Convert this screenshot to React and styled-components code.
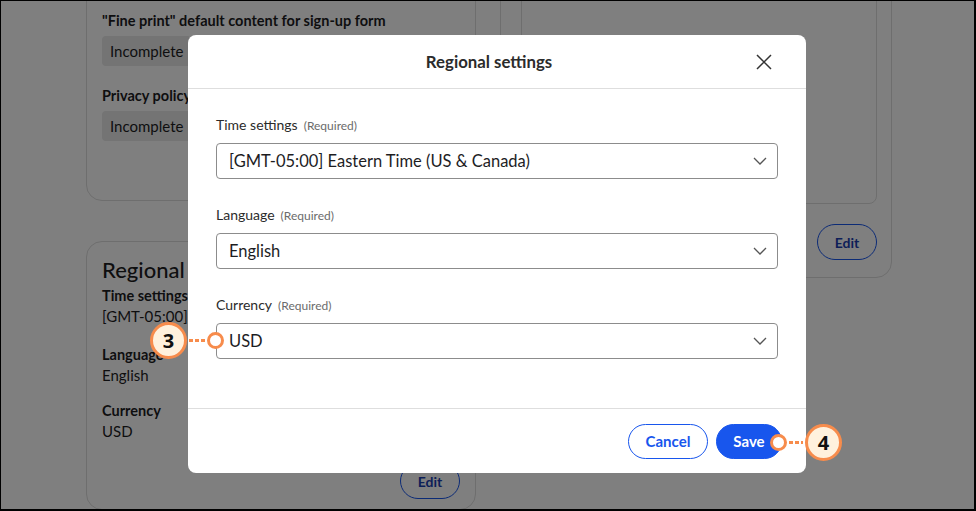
import React from 'react'
import styled, { createGlobalStyle } from 'styled-components'

const GlobalStyle = createGlobalStyle`
  html, body {
    margin: 0;
    padding: 0;
    background: #000;
  }
  body {
    font-family: Lato, "Open Sans", sans-serif;
    color: #1d1d1f;
  }
`

const Frame = styled.div`
  width: 973px;
  height: 508px;
  margin: 1px 2px 2px 1px;
  background: #fff;
  position: relative;
  overflow: hidden;
`

const Page = styled.div`
  display: grid;
  grid-template-columns: 390px 392px;
  column-gap: 24px;
  padding-left: 85px;
  margin-top: -60px;
`

const Column = styled.div`
  display: flex;
  flex-direction: column;
  gap: 40px;
`

const Card = styled.div`
  border: 1px solid #dcdcdc;
  border-radius: 16px;
  padding: ${p => p.pad || '16px 15px'};
  height: ${p => p.h}px;
  box-sizing: border-box;
  display: flex;
  flex-direction: column;
  overflow: hidden;
`

const FieldTitle = styled.div`
  font-size: 14.5px;
  font-weight: 700;
  line-height: 20px;
  margin-top: ${p => p.mt || 0}px;
`

const FieldValue = styled.div`
  font-size: 15px;
  line-height: 20px;
`

const Chip = styled.span`
  align-self: flex-start;
  background: #e8e8e8;
  border-radius: 4px;
  padding: 5px 8px;
  font-size: 15px;
  line-height: 20px;
  margin-top: 5px;
`

const CardHeading = styled.h2`
  margin: 0 0 2px;
  font-size: 22px;
  font-weight: 500;
  line-height: 28px;
`

const EditButton = styled.button`
  align-self: flex-end;
  margin-top: ${p => (p.flush ? '0' : 'auto')};
  width: 60px;
  height: 36px;
  flex-shrink: 0;
  border-radius: 18px;
  border: 1.5px solid #1856ed;
  background: #fff;
  color: #1b3fb0;
  font-family: inherit;
  font-size: 14px;
  font-weight: 700;
`

const InnerBox = styled.div`
  border: 1px solid #dcdcdc;
  border-radius: 8px;
  height: 260px;
  flex-shrink: 0;
  margin-bottom: 20px;
`

const Overlay = styled.div`
  position: absolute;
  inset: 0;
  background: rgba(0, 0, 0, 0.5);
  padding: 34px 0 0 187px;
`

const Modal = styled.div`
  width: 618px;
  height: 438px;
  background: #fff;
  border-radius: 8px;
  display: flex;
  flex-direction: column;
  position: relative;
`

const ModalHeader = styled.div`
  height: 53px;
  border-bottom: 1px solid #dedede;
  display: flex;
  align-items: center;
  justify-content: center;
  padding-right: 16px;
  position: relative;
`

const ModalTitle = styled.h1`
  margin: 0;
  font-size: 16.8px;
  font-weight: 700;
  color: #2b2b2b;
`

const CloseButton = styled.button`
  position: absolute;
  right: 32px;
  top: 17px;
  width: 20px;
  height: 20px;
  padding: 0;
  border: none;
  background: none;
  display: flex;
`

const ModalBody = styled.div`
  flex: 1;
  padding: 26px 28px 0;
  display: flex;
  flex-direction: column;
  gap: 26px;
`

const Field = styled.div`
  display: flex;
  flex-direction: column;
  gap: 8px;
`

const Label = styled.div`
  display: flex;
  align-items: baseline;
  gap: 6px;
  font-size: 14px;
  line-height: 19px;
  color: #2b2b2b;
`

const Required = styled.span`
  font-size: 12px;
  color: #6b6b6b;
`

const Select = styled.div`
  height: 36px;
  box-sizing: border-box;
  border: 1px solid #8c8c8c;
  border-radius: 4px;
  display: flex;
  align-items: center;
  justify-content: space-between;
  padding: 0 10px 0 12px;
  font-size: 16.5px;
  color: #1d1d1f;
`

const ModalFooter = styled.div`
  height: 64px;
  border-top: 1px solid #dedede;
  display: flex;
  align-items: center;
  justify-content: flex-end;
  gap: 8px;
  padding-right: 24px;
`

const Button = styled.button`
  height: 35px;
  border-radius: 18px;
  padding: 0;
  width: ${p => p.w}px;
  font-family: inherit;
  font-size: 15px;
  font-weight: 700;
  border: 1.5px solid #1856ed;
  background: ${p => (p.primary ? '#1856ed' : '#fff')};
  color: ${p => (p.primary ? '#fff' : '#1856ed')};
`

const Callout = styled.div`
  position: absolute;
  left: ${p => p.x}px;
  top: ${p => p.y}px;
  display: flex;
  align-items: center;
  flex-direction: ${p => (p.reverse ? 'row-reverse' : 'row')};
`

const Bubble = styled.div`
  width: 37px;
  height: 37px;
  box-sizing: border-box;
  border-radius: 50%;
  border: 3px solid #f78c4c;
  background: #fff1dd;
  display: flex;
  align-items: center;
  justify-content: center;
  font-family: "Open Sans", sans-serif;
  font-size: 20px;
  font-weight: 700;
  color: #111;
`

const Dots = styled.div`
  width: ${p => p.len}px;
  height: 3px;
  margin: 0 2px;
  background: repeating-linear-gradient(90deg, #f78c4c 0 4px, transparent 4px 6px);
`

const Ring = styled.div`
  width: 17px;
  height: 17px;
  box-sizing: border-box;
  border-radius: 50%;
  border: 3px solid #f78c4c;
  background: #fff;
`

const Chevron = () => (
  <svg width="14" height="8" viewBox="0 0 14 8" fill="none">
    <path d="M1 1l6 6 6-6" stroke="#555" strokeWidth="1.3" />
  </svg>
)

function SelectField({ label, value }) {
  return (
    <Field>
      <Label>
        <span>{label}</span>
        <Required>(Required)</Required>
      </Label>
      <Select>
        <span>{value}</span>
        <Chevron />
      </Select>
    </Field>
  )
}

export default function App() {
  return (
    <>
      <GlobalStyle />
      <Frame>
        <Page>
          <Column>
            <Card h={260} pad="69px 15px 16px">
              <FieldTitle>"Fine print" default content for sign-up form</FieldTitle>
              <Chip>Incomplete</Chip>
              <FieldTitle mt={20}>Privacy policy</FieldTitle>
              <Chip>Incomplete</Chip>
            </Card>
            <Card h={269} pad="14px 15px 10px">
              <CardHeading>Regional</CardHeading>
              <FieldTitle>Time settings</FieldTitle>
              <FieldValue>[GMT-05:00] Eastern Time (US &amp; Canada)</FieldValue>
              <FieldTitle mt={19}>Language</FieldTitle>
              <FieldValue>English</FieldValue>
              <FieldTitle mt={16}>Currency</FieldTitle>
              <FieldValue>USD</FieldValue>
              <EditButton>Edit</EditButton>
            </Card>
          </Column>
          <Column>
            <Card h={337} pad="0 14px 16px 20px">
              <InnerBox />
              <EditButton flush>Edit</EditButton>
            </Card>
          </Column>
        </Page>

        <Overlay>
          <Modal>
            <ModalHeader>
              <ModalTitle>Regional settings</ModalTitle>
              <CloseButton aria-label="Close">
                <svg width="20" height="20" viewBox="0 0 20 20">
                  <path d="M3 3l14 14M17 3L3 17" stroke="#333" strokeWidth="1.5" />
                </svg>
              </CloseButton>
            </ModalHeader>
            <ModalBody>
              <SelectField label="Time settings" value="[GMT-05:00] Eastern Time (US & Canada)" />
              <SelectField label="Language" value="English" />
              <SelectField label="Currency" value="USD" />
            </ModalBody>
            <ModalFooter>
              <Button w={80}>Cancel</Button>
              <Button primary w={66}>Save</Button>
            </ModalFooter>
          </Modal>
        </Overlay>

        <Callout x={149} y={321}>
          <Bubble>3</Bubble>
          <Dots len={16} />
          <Ring />
        </Callout>
        <Callout x={769} y={423} reverse>
          <Bubble>4</Bubble>
          <Dots len={14} />
          <Ring />
        </Callout>
      </Frame>
    </>
  )
}
